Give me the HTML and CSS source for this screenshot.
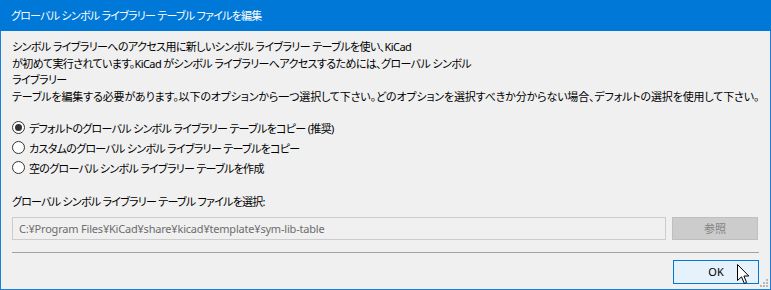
FILE: index.html
```html
<!DOCTYPE html>
<html lang="ja">
<head>
    <meta charset="UTF-8">
    <title>グローバル シンボル ライブラリー テーブル ファイルを編集</title>
    <link rel="stylesheet" href="styles.css">
</head>
<body>
    <div class="window">
        <div class="titlebar">グローバル シンボル ライブラリー テーブル ファイルを編集</div>
        <div class="content">
            <p class="message">
                <span class="line">シンボル ライブラリーへのアクセス用に新しいシンボル ライブラリー テーブルを使い、KiCad</span>
                <span class="line">が初めて実行されています。KiCad がシンボル ライブラリーへアクセスするためには、グローバル シンボル</span>
                <span class="line">ライブラリー</span>
                <span class="line long">テーブルを編集する必要があります。以下のオプションから一つ選択して下さい。どのオプションを選択すべきか分からない場合、デフォルトの選択を使用して下さい。</span>
            </p>

            <div class="options">
                <label class="option"><span class="radio checked"></span>デフォルトのグローバル シンボル ライブラリー テーブルをコピー (推奨)</label>
                <label class="option"><span class="radio"></span>カスタムのグローバル シンボル ライブラリー テーブルをコピー</label>
                <label class="option"><span class="radio"></span>空のグローバル シンボル ライブラリー テーブルを作成</label>
            </div>

            <div class="field-label">グローバル シンボル ライブラリー テーブル ファイルを選択:</div>
            <div class="file-row">
                <div class="path-input">C:¥Program Files¥KiCad¥share¥kicad¥template¥sym-lib-table</div>
                <button class="browse" disabled>参照</button>
            </div>

            <hr class="separator">

            <div class="footer">
                <button class="ok">OK</button>
            </div>
        </div>

        <svg class="cursor" width="13" height="21" viewBox="0 0 13 21">
            <polygon points="0.5,0.5 0.5,16.5 4.5,12.8 7.3,19.5 9.6,18.5 6.9,12 11.8,12" fill="#fff" stroke="#000" stroke-width="1"/>
        </svg>
        <svg class="grip" width="9" height="9" viewBox="0 0 9 9">
            <rect x="6" y="0" width="2" height="2" fill="#b8b8b8"/>
            <rect x="3" y="3" width="2" height="2" fill="#b8b8b8"/>
            <rect x="6" y="3" width="2" height="2" fill="#b8b8b8"/>
            <rect x="0" y="6" width="2" height="2" fill="#b8b8b8"/>
            <rect x="3" y="6" width="2" height="2" fill="#b8b8b8"/>
            <rect x="6" y="6" width="2" height="2" fill="#b8b8b8"/>
        </svg>
    </div>
</body>
</html>
```

FILE: styles.css
```css
body {
    margin: 0;
    background: #f0f0f0;
    font-family: "Noto Sans", "Noto Sans CJK JP", sans-serif;
    font-size: 11px;
    font-feature-settings: "palt";
    letter-spacing: -0.6px;
    color: #000;
}

.window {
    position: relative;
    width: 771px;
    height: 290px;
    box-sizing: border-box;
    border: 1px solid #1a7fd8;
    border-top: none;
    background: #f0f0f0;
}

.titlebar {
    height: 31px;
    margin: 0 -1px;
    padding-left: 11px;
    background: #0078d7;
    color: #fff;
    line-height: 31px;
    letter-spacing: -0.75px;
}

.content {
    padding: 8px 11px 0 11px;
}

.message {
    margin: 0;
    line-height: 16.7px;
    white-space: nowrap;
}

.line {
    display: block;
}

.line.long {
    letter-spacing: -0.15px;
}

.options {
    margin-top: 12px;
    display: flex;
    flex-direction: column;
}

.option {
    height: 20px;
    display: flex;
    align-items: center;
    gap: 4px;
    white-space: nowrap;
    letter-spacing: -0.7px;
}

.radio {
    width: 11px;
    height: 11px;
    border: 1px solid #333;
    border-radius: 50%;
    background: #fff;
    display: flex;
    justify-content: center;
    align-items: center;
}

.radio.checked::after {
    content: "";
    width: 7px;
    height: 7px;
    border-radius: 50%;
    background: #333;
}

.field-label {
    margin-top: 16px;
    line-height: 16px;
    letter-spacing: -0.75px;
}

.file-row {
    margin-top: 7px;
    display: flex;
    gap: 6px;
}

.path-input {
    width: 654px;
    height: 23px;
    box-sizing: border-box;
    border: 1px solid #cccccc;
    padding-left: 6px;
    line-height: 21px;
    letter-spacing: -0.2px;
    color: #6d6d6d;
}

button {
    font-family: inherit;
    font-size: 11px;
    font-feature-settings: "palt";
    letter-spacing: 0;
    box-sizing: border-box;
    width: 86px;
    padding: 0;
}

.browse {
    height: 23px;
    background: #cccccc;
    border: 1px solid #bfbfbf;
    color: #838383;
}

.separator {
    margin: 12px 0 0 0;
    height: 0;
    border: none;
    border-top: 1px solid #a0a0a0;
}

.footer {
    margin-top: 7px;
    display: flex;
    justify-content: flex-end;
}

.ok {
    height: 24px;
    background: #e5f1fb;
    border: 1px solid #0078d7;
    color: #000;
}

.cursor {
    position: absolute;
    left: 736px;
    top: 264px;
}

.grip {
    position: absolute;
    right: 1px;
    bottom: 1px;
}
```
